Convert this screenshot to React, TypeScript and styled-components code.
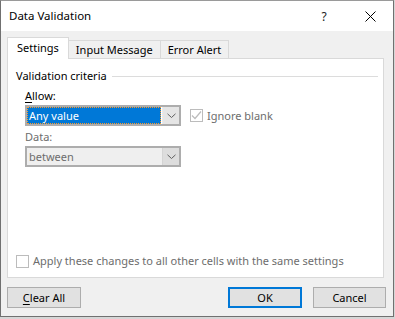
import { createGlobalStyle, styled } from "styled-components";

const GlobalStyle = createGlobalStyle`
  * {
    box-sizing: border-box;
  }
  html, body {
    margin: 0;
    padding: 0;
    background: #d6d6d6;
    font-family: "Noto Sans", "Open Sans", sans-serif;
    font-size: 11px;
    color: #000;
  }
`;

const Window = styled.div`
  width: 394px;
  height: 317px;
  border: 1px solid #707070;
  border-top-color: #9a9a9a;
  background: #f0f0f0;
  display: flex;
  flex-direction: column;
`;

const TitleBar = styled.div`
  height: 30px;
  background: #fff;
  display: flex;
  align-items: center;
  padding-left: 8px;
`;

const Title = styled.div`
  flex: 1;
  font-size: 11.5px;
  line-height: 16px;
`;

const CaptionButton = styled.div`
  width: 46px;
  height: 30px;
  display: flex;
  align-items: center;
  justify-content: center;
  font-size: 12px;
  color: #222;
`;

const Body = styled.div`
  flex: 1;
  display: flex;
  flex-direction: column;
  padding: 6px 9px 0 6px;
`;

const TabStrip = styled.div`
  display: flex;
  align-items: flex-end;
  height: 22px;
  margin-bottom: -1px;
  position: relative;
  z-index: 1;
`;

const Tab = styled.div<{ $active?: boolean }>`
  height: ${(p) => (p.$active ? 22 : 19)}px;
  padding: 0 ${(p) => (p.$active ? 9 : 7)}px;
  margin-left: ${(p) => (p.$active ? 0 : -1)}px;
  border: 1px solid #d9d9d9;
  border-bottom: ${(p) => (p.$active ? "none" : "1px solid #d9d9d9")};
  background: ${(p) => (p.$active ? "#fff" : "#f0f0f0")};
  display: flex;
  align-items: center;
  padding-bottom: ${(p) => (p.$active ? 2 : 0)}px;
  line-height: 16px;
`;

const Panel = styled.div`
  height: 220px;
  background: #fff;
  border: 1px solid #d9d9d9;
  display: flex;
  flex-direction: column;
  padding: 9px 5px 8px 8px;
`;

const GroupHeader = styled.div`
  display: flex;
  align-items: center;
  height: 16px;
  line-height: 16px;
`;

const GroupLine = styled.div`
  flex: 1;
  height: 1px;
  background: #dcdcdc;
  margin-left: 5px;
`;

const FieldLabel = styled.div<{ $disabled?: boolean }>`
  margin: ${(p) => (p.$disabled ? "3px" : "4px")} 0 1px 9px;
  height: 16px;
  line-height: 16px;
  color: ${(p) => (p.$disabled ? "#6d6d6d" : "#000")};
`;

const Row = styled.div`
  display: flex;
  align-items: center;
  gap: 9px;
  margin-left: 9px;
`;

const Select = styled.div<{ $disabled?: boolean }>`
  width: 156px;
  height: 21px;
  border: 2px solid #adadad;
  background: ${(p) => (p.$disabled ? "#efefef" : "#fff")};
  display: flex;
`;

const SelectValue = styled.div<{ $focused?: boolean; $disabled?: boolean }>`
  flex: 1;
  margin: 0 1px 0 0;
  padding-left: 2px;
  display: flex;
  align-items: center;
  line-height: 15px;
  background: ${(p) => (p.$focused ? "#0078d7" : "transparent")};
  color: ${(p) => (p.$focused ? "#fff" : p.$disabled ? "#6d6d6d" : "#000")};
  outline: ${(p) => (p.$focused ? "1px dotted #ff9a28" : "none")};
  outline-offset: -1px;
`;

const DropButton = styled.div<{ $disabled?: boolean }>`
  width: 17px;
  border-left: 1px solid ${(p) => (p.$disabled ? "#d4d4d4" : "#eaeaea")};
  background: ${(p) => (p.$disabled ? "#dddddd" : "#e5e5e5")};
  display: flex;
  align-items: center;
  justify-content: center;
`;

const CheckRow = styled.div<{ $bottom?: boolean }>`
  display: flex;
  align-items: center;
  gap: 4px;
  color: #6d6d6d;
  line-height: 16px;
  margin-top: ${(p) => (p.$bottom ? "auto" : "0")};
`;

const CheckBox = styled.div`
  width: 13px;
  height: 13px;
  border: 1px solid #bcbcbc;
  background: #fff;
  display: flex;
  align-items: center;
  justify-content: center;
`;

const Footer = styled.div`
  display: flex;
  align-items: center;
  margin: 9px -2px 0 0;
`;

const Button = styled.div<{ $primary?: boolean }>`
  width: 74px;
  height: 21px;
  background: #e1e1e1;
  border: ${(p) => (p.$primary ? "2px solid #0078d7" : "1px solid #adadad")};
  display: flex;
  align-items: center;
  justify-content: center;
  line-height: 16px;
`;

const Spacer = styled.div`
  flex: 1;
`;

const Key = styled.span`
  text-decoration: underline;
  text-underline-offset: 2px;
`;

const Chevron = () => (
  <svg width="9" height="6" viewBox="0 0 9 6">
    <path d="M0.5 0.8 L4.5 4.5 L8.5 0.8" fill="none" stroke="#606060" strokeWidth="1" />
  </svg>
);

const Check = () => (
  <svg width="11" height="11" viewBox="0 0 11 11">
    <path d="M1 5.5 L4 8.5 L10 1.5" fill="none" stroke="#bcbcbc" strokeWidth="1.2" />
  </svg>
);

const CloseIcon = () => (
  <svg width="11" height="11" viewBox="0 0 11 11">
    <path d="M0.5 0.5 L10.5 10.5 M10.5 0.5 L0.5 10.5" stroke="#000" strokeWidth="1" />
  </svg>
);

export default function App() {
  return (
    <>
      <GlobalStyle />
      <Window>
        <TitleBar>
          <Title>Data Validation</Title>
          <CaptionButton>?</CaptionButton>
          <CaptionButton>
            <CloseIcon />
          </CaptionButton>
        </TitleBar>
        <Body>
          <TabStrip>
            <Tab $active>Settings</Tab>
            <Tab>Input Message</Tab>
            <Tab>Error Alert</Tab>
          </TabStrip>
          <Panel>
            <GroupHeader>
              Validation criteria
              <GroupLine />
            </GroupHeader>
            <FieldLabel>
              <Key>A</Key>llow:
            </FieldLabel>
            <Row>
              <Select>
                <SelectValue $focused>Any value</SelectValue>
                <DropButton>
                  <Chevron />
                </DropButton>
              </Select>
              <CheckRow>
                <CheckBox>
                  <Check />
                </CheckBox>
                Ignore blank
              </CheckRow>
            </Row>
            <FieldLabel $disabled>Data:</FieldLabel>
            <Row>
              <Select $disabled>
                <SelectValue $disabled>between</SelectValue>
                <DropButton $disabled>
                  <Chevron />
                </DropButton>
              </Select>
            </Row>
            <CheckRow $bottom>
              <CheckBox />
              Apply these changes to all other cells with the same settings
            </CheckRow>
          </Panel>
          <Footer>
            <Button>
              <span>
                <Key>C</Key>lear All
              </span>
            </Button>
            <Spacer />
            <Button $primary>OK</Button>
            <Button style={{ marginLeft: 11, width: 73 }}>Cancel</Button>
          </Footer>
        </Body>
      </Window>
    </>
  );
}
